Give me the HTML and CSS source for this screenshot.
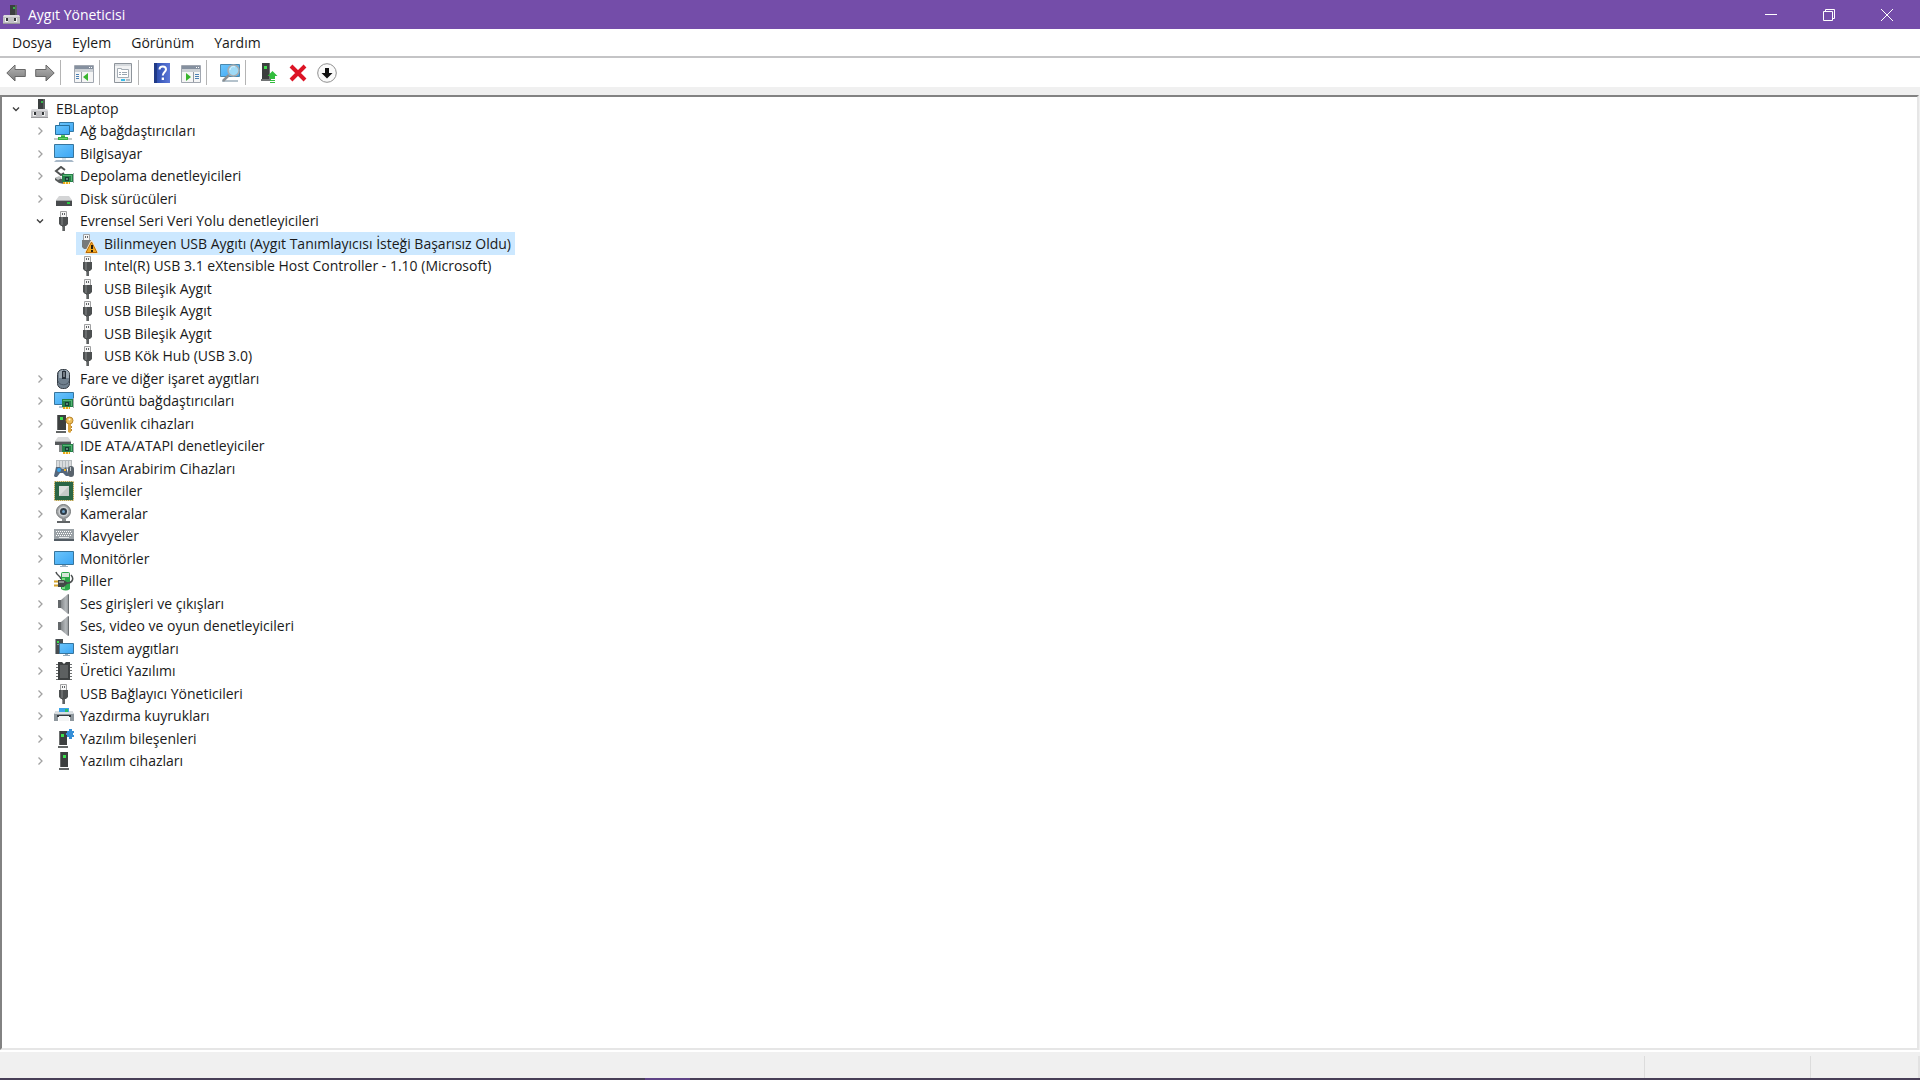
FILE: index.html
```html
<!DOCTYPE html>
<html lang="tr">
<head>
    <meta charset="utf-8">
    <meta name="viewport" content="width=device-width, initial-scale=1">
    <title>Aygıt Yöneticisi</title>
    <link rel="stylesheet" href="styles.css">
</head>
<body>
    <svg class="sprite" aria-hidden="true">
        <defs>
            <linearGradient id="screen" x1="0" y1="0" x2="1" y2="1">
                <stop offset="0" stop-color="#6cc5fb"/>
                <stop offset="1" stop-color="#3ba6f4"/>
            </linearGradient>
            <linearGradient id="metal" x1="0" y1="0" x2="1" y2="0">
                <stop offset="0" stop-color="#85898c"/>
                <stop offset=".6" stop-color="#b4b8bb"/>
                <stop offset="1" stop-color="#8b8f92"/>
            </linearGradient>
            <linearGradient id="arrow" x1="0" y1="0" x2="0" y2="1">
                <stop offset="0" stop-color="#b5b5b5"/>
                <stop offset="1" stop-color="#7c7c7c"/>
            </linearGradient>
            <linearGradient id="book" x1="0" y1="0" x2="1" y2="0">
                <stop offset="0" stop-color="#2446a8"/>
                <stop offset="1" stop-color="#5d78d8"/>
            </linearGradient>
        </defs>
        <symbol id="i-pc" viewBox="0 0 20 20">
            <path d="M8 0h6v11H8z" fill="#3b3f3f"/>
            <path d="M13 0h2v11h-2z" fill="#5a5e5e"/>
            <path d="M11 2h2v2h-2z" fill="#37b24a"/>
            <path d="M2 10h15l1 3v6H1v-6z" fill="#c0c0c3"/>
            <path d="M2 10h15l1 2H1z" fill="#d9d9dc"/>
            <path d="M1 18h17v1H1z" fill="#98989b"/>
            <path d="M3 13h3v4H3zM12 13h3v4h-3z" fill="#f1f1f1"/>
            <path d="M4 13h2v3H4zM12 13h2v3h-2z" fill="#333639"/>
        </symbol>
        <symbol id="i-net" viewBox="0 0 20 20">
            <path d="M5.500 1.500h14v9h-14z" fill="url(#screen)" stroke="#3479a5"/>
            <path d="M1.500 4.500h14v9h-14z" fill="url(#screen)" stroke="#276f9c"/>
            <path d="M0 17h18v2H0z" fill="#c5cbc8"/>
            <path d="M7 14h4v2h3v3H4v-3h3z" fill="#35ad43"/>
            <path d="M7 14h4v1H7zM5 17h8v1H5z" fill="#69d36b"/>
        </symbol>
        <symbol id="i-computer" viewBox="0 0 20 20">
            <path d="M.5.500h19v13H.5z" fill="url(#screen)" stroke="#37759d"/>
            <path d="M8 14h4v2H8z" fill="#dce3e9"/>
            <path d="M2 16h16l2 2H0z" fill="#a7b8c8"/>
        </symbol>
        <symbol id="i-card" viewBox="0 0 20 20">
            <path d="M8 8h11v8H8z" fill="#258047"/>
            <path d="M9 9h9v1H9zM17 9h1v6h-1z" fill="#58b777"/>
            <path d="M11 11h4v4h-4z" fill="#183d35"/>
            <path d="M12 12h2v2h-2z" fill="#5d8a78"/>
            <path d="M19 7h1v10h-1z" fill="#a8adb0"/>
            <path d="M9 16h7v2H9z" fill="#e8a719"/>
            <path d="M11 16h1v2h-1zM14 16h1v2h-1z" fill="#fff0a4"/>
        </symbol>
        <symbol id="i-storage" viewBox="0 0 20 20">
            <path d="M11 4 7 1 2 5l5 4 3-2" fill="none" stroke="#505252" stroke-width="2"/>
            <path d="m1 12 4-1 4 3 1 4-5-1-4-3z" fill="#555959"/>
            <path d="m1 12 4-2 3 2-4 2z" fill="#bcc0c0"/>
            <use href="#i-card"/>
        </symbol>
        <symbol id="i-disk" viewBox="0 0 20 20">
            <path d="m5 7-3 4h16l-3-4z" fill="#d4d5d6"/>
            <path d="M2 11h16v6H2z" fill="#484b4d"/>
            <path d="M2 11h16v1H2z" fill="#a4a6a8"/>
            <path d="M13 13h3v2h-3z" fill="#29c743"/>
        </symbol>
        <symbol id="i-usb" viewBox="0 0 20 20">
            <path d="M6.500.5h6V7h-6z" fill="#f5f5f5" stroke="#a0a1a2"/>
            <path d="M8 2h1v2H8zM10 2h1v2h-1z" fill="#626567"/>
            <path d="M5 6h9v7l-2 2H7l-2-2z" fill="#4d5051"/>
            <path d="M7 6h2v8H7z" fill="#6a6d6e"/>
            <path d="M8 15h3v5H8z" fill="#5e6162"/>
            <path d="M8 16h1v4H8z" fill="#929595"/>
        </symbol>
        <symbol id="i-usb-warn" viewBox="0 0 20 20">
            <path d="M5.500.5h6V7h-6z" fill="#f5f5f5" stroke="#a0a1a2"/>
            <path d="M7 2h1v2H7zM9 2h1v2H9z" fill="#626567"/>
            <path d="M4 6h9v7l-2 2H6l-2-2z" fill="#77797a"/>
            <path d="M13.500 7.500 19 18.500H8z" fill="#f1a51b" stroke="#f6e5c8" stroke-width="2.500" stroke-linejoin="round"/>
            <path d="M13.500 8 19 18.500H8z" fill="#f2ab22" stroke="#b96a07" stroke-linejoin="round"/>
            <path d="M13 11h2v4h-2zM13 16h2v2h-2z" fill="#291d0b"/>
        </symbol>
        <symbol id="i-mouse" viewBox="0 0 20 20">
            <rect x="3.500" y=".5" width="12" height="19" rx="5" fill="#70808e" stroke="#333a42"/>
            <path d="M5 3c2-2 3-2 4-2v8H5zM11 1c3 0 4 2 4 4v4h-4z" fill="#9eabb5"/>
            <path d="M8 2h4v8H8z" fill="#273039"/>
            <path d="M9.500 3h1v5h-1z" fill="#c1c8ce"/>
            <path d="M4 12c1 5 10 5 11 0" fill="none" stroke="#4b5865"/>
        </symbol>
        <symbol id="i-display" viewBox="0 0 20 20">
            <path d="M.5 1.500h19v12H.5z" fill="url(#screen)" stroke="#37759d"/>
            <path d="M5 15h4v2H5z" fill="#bcc9d2"/>
            <use href="#i-card"/>
        </symbol>
        <symbol id="i-tower" viewBox="0 0 20 20">
            <path d="M6 1h8v15H6z" fill="#3c3f3f"/>
            <path d="M6 1h1v15H6z" fill="#6b6e6e"/>
            <path d="M5 17h10v2H5z" fill="#626565"/>
            <path d="M9 4h3v3H9z" fill="#3de04e"/>
        </symbol>
        <symbol id="i-security" viewBox="0 0 20 20">
            <path d="M3 1h9v15H3z" fill="#3c3f3f"/>
            <path d="M3 1h1v15H3z" fill="#6b6e6e"/>
            <path d="M2 17h10v2H2z" fill="#626565"/>
            <path d="M6 3h3v3H6z" fill="#3de04e"/>
            <circle cx="15.500" cy="6.500" r="3.500" fill="#edbd57" stroke="#b9852d"/>
            <circle cx="15.500" cy="5.500" r="1" fill="#fff"/>
            <path d="M14 10h3v8l-1 1-2-1z" fill="#dca640"/>
            <path d="M17 12h1v2h-1zM17 15h1v2h-1z" fill="#b9852d"/>
        </symbol>
        <symbol id="i-ide" viewBox="0 0 20 20">
            <path d="m4 1-3 4h16l-3-4z" fill="#dadbdc"/>
            <path d="M1 5h16v4H1z" fill="#55595b"/>
            <path d="M1 5h16v1H1z" fill="#a9abad"/>
            <path d="M5 9h4v7H5z" fill="#858989"/>
            <use href="#i-card"/>
        </symbol>
        <symbol id="i-hid" viewBox="0 0 20 20">
            <path d="M2 1h16v9H2z" fill="#b5babd"/>
            <path d="M3 3h14M3 5h14M3 7h14" stroke="#fff" stroke-dasharray="2 1"/>
            <path d="M0 17 2 8h4l2 2h2l2-2 3 9h-3l-3-3H6l-3 4H1z" fill="#55677b"/>
            <circle cx="5" cy="11" r="2" fill="#38a4ed"/>
            <path d="M10 10h2v2h-2z" fill="#f0b22e"/>
            <rect x="14" y="7" width="6" height="11" rx="3" fill="#59636c"/>
            <path d="M16 8h1v4h-1z" fill="#c3c9ce"/>
        </symbol>
        <symbol id="i-cpu" viewBox="0 0 20 20">
            <rect x="1" y="1" width="18" height="18" fill="none" stroke="#b8a34e" stroke-width="2" stroke-dasharray="1 1"/>
            <path d="M1 1h18v18H1z" fill="#2b6646"/>
            <rect x=".5" y=".5" width="19" height="19" fill="none" stroke="#b8a34e" stroke-dasharray="1 1"/>
            <path d="M5 5h10v10H5z" fill="#dcdfdd"/>
            <path d="M5 15 15 5v10z" fill="#c5cac7"/>
        </symbol>
        <symbol id="i-camera" viewBox="0 0 20 20">
            <circle cx="9.500" cy="7.500" r="7" fill="#a4a7a9" stroke="#747779"/>
            <circle cx="9.500" cy="7.500" r="5" fill="#d0d3d5"/>
            <circle cx="9.500" cy="7.500" r="3.500" fill="#303c47"/>
            <circle cx="9.500" cy="7.500" r="1.500" fill="#6fa0c5"/>
            <path d="M8 15h4v2H8z" fill="#898d8f"/>
            <path d="M3 17h13v2H3z" fill="#606466"/>
        </symbol>
        <symbol id="i-keyboard" viewBox="0 0 20 20">
            <path d="M0 3h20v12H0z" fill="#9aa1a6"/>
            <path d="M0 13h20v2H0z" fill="#535c64"/>
            <path d="M2 5.500h16M3 7.500h15M2 9.500h16" stroke="#fff" stroke-dasharray="1 1"/>
            <path d="M5 11.500h10" stroke="#e5e8ea"/>
        </symbol>
        <symbol id="i-monitor" viewBox="0 0 20 20">
            <path d="M.5 2.500h19v13H.5z" fill="url(#screen)" stroke="#37759d"/>
            <path d="M8 16h4v1H8zM6 17h8v1H6z" fill="#9db0bf"/>
        </symbol>
        <symbol id="i-battery" viewBox="0 0 20 20">
            <path d="M7 3q0-2 2-2h5q2 0 2 2v15q-4 3-9 0z" fill="#2ea64b"/>
            <path d="M8 2h7v4H8z" fill="#d8e6da"/>
            <path d="M8 7h3v11H8z" fill="#79dd82"/>
            <path d="M13 12c6 0 7-5 4-8M2 1c1 4 4 3 5 7" fill="none" stroke="#4b4f50" stroke-width="1.500"/>
            <path d="M4 9h6l4 3-4 4H4z" fill="#444948"/>
            <path d="M0 10.500h4M0 14.500h4" stroke="#d3a22b" stroke-width="2"/>
            <path d="M5 10h5v2H5z" fill="#8d9290"/>
        </symbol>
        <symbol id="i-speaker" viewBox="0 0 20 20">
            <path d="M4 6h4v8H4z" fill="#64686b"/>
            <path d="m7 6 7-6h1v20h-1l-7-6z" fill="url(#metal)"/>
            <path d="M14 1h1v18h-1z" fill="#6b6f72"/>
        </symbol>
        <symbol id="i-system" viewBox="0 0 20 20">
            <path d="M1 0h8v15H1z" fill="#484d50"/>
            <path d="M1 0h1v15H1zM3 5h5v1H3z" fill="#959b9e"/>
            <path d="M3 2h2v2H3z" fill="#3ae24b"/>
            <path d="M5.500 4.500h14v10h-14z" fill="url(#screen)" stroke="#37759d"/>
            <path d="M11 15h3v1h2v1H9v-1h2z" fill="#94aabb"/>
        </symbol>
        <symbol id="i-firmware" viewBox="0 0 20 20">
            <path d="M2 3.500h16M2 6.500h16M2 9.500h16M2 12.500h16M2 15.500h16M2 18.500h16" stroke="#6d7071"/>
            <path d="M4 1h4l2 2 2-2h4v18H4z" fill="#3d4041"/>
            <path d="M6 4h8v13H6z" fill="#5d6061"/>
        </symbol>
        <symbol id="i-printer" viewBox="0 0 20 20">
            <path d="M5 2h10v5H5z" fill="#3ba3e8"/>
            <path d="M11 3h3v3h-3z" fill="#26bf69"/>
            <path d="m2 5-2 3v7h4v-4h12v4h4V8l-2-3z" fill="#8e979d"/>
            <path d="M2 5h16l2 3H0z" fill="#d9dee1"/>
            <path d="M5 2h10v4H5z" fill="#3ba3e8"/>
            <path d="M11 3h3v3h-3z" fill="#26bf69"/>
            <path d="M3 9h14v2H3z" fill="#34393e"/>
            <path d="M5 10h10v5H5z" fill="#f4f5f5"/>
        </symbol>
        <symbol id="i-component" viewBox="0 0 20 20">
            <path d="M5 2h8v14H5z" fill="#3c3f3f"/>
            <path d="M5 2h1v14H5z" fill="#6b6e6e"/>
            <path d="M4 17h10v2H4z" fill="#626565"/>
            <path d="M7 5h3v3H7z" fill="#3de04e"/>
            <path d="M13 2h2V0h3v2h2v2h-1v2h1v2h-2v2h-3V8h-2V6h-1V4h1z" fill="#368fd7"/>
        </symbol>
        <symbol id="t-back" viewBox="0 0 20 20">
            <path d="M.8 10 9 2v4.500h10.300v7H9V18z" fill="url(#arrow)" stroke="#686868"/>
        </symbol>
        <symbol id="t-window" viewBox="0 0 20 20">
            <path d="M.5 2.500h19v17H.5z" fill="#f5f5f5" stroke="#a1a7b0"/>
            <path d="M1 3h18v3H1z" fill="#85909f"/>
            <path d="M15 4h1v1h-1zM17 4h1v1h-1z" fill="#fff"/>
            <path d="M1 6h18v3H1z" fill="#cbd0d5"/>
        </symbol>
        <symbol id="t-tree" viewBox="0 0 20 20">
            <use href="#t-window"/>
            <path d="M7 9h1v10H7z" fill="#9299a3"/>
            <path d="M2 11.500h3M2 13.500h3M2 15.500h3" stroke="#4b81b5"/>
            <path d="M14 10v8l-5-4z" fill="#39b52e"/>
        </symbol>
        <symbol id="t-props" viewBox="0 0 20 20">
            <path d="M1.500.5h17v19h-17z" fill="#f1f2f3" stroke="#8e949b"/>
            <path d="M2 1h16v2H2z" fill="#d5d9dd"/>
            <path d="M4.500 5.500h4v1h7v8h-11z" fill="#fff" stroke="#a5adb5"/>
            <path d="M6 9.500h2M6 11.500h2M9 9.500h5M9 11.500h5" stroke="#9ba6b1"/>
            <path d="M8 16h4v2H8z" fill="#38bce9"/>
            <path d="M13 16h4v2h-4z" fill="#b8c0c8"/>
        </symbol>
        <symbol id="t-help" viewBox="0 0 20 20">
            <path d="M2 0h16v20H2z" fill="url(#book)"/>
            <path d="M2 0h3v20H2z" fill="#203a87"/>
            <path d="M7.500 6.500c0-4 6.500-4 6.500 0 0 2.500-3.200 2.500-3.200 6" fill="none" stroke="#fff" stroke-width="2"/>
            <path d="M9.700 14.500H12V17H9.700z" fill="#fff"/>
        </symbol>
        <symbol id="t-action" viewBox="0 0 20 20">
            <use href="#t-window"/>
            <path d="M12 9h1v10h-1z" fill="#9299a3"/>
            <path d="M14 11.500h4M14 13.500h4M14 15.500h4" stroke="#4b81b5"/>
            <path d="M5 10v8l5-4z" fill="#39b52e"/>
        </symbol>
        <symbol id="t-scan" viewBox="0 0 20 20">
            <path d="M.5 1.500h19v12H.5z" fill="url(#screen)" stroke="#4b89ae"/>
            <path d="M2 17h16v2H2z" fill="#b4c2cc"/>
            <path d="m9 12-6 6" stroke="#8b8f92" stroke-width="2.500"/>
            <circle cx="13.500" cy="7.500" r="5.500" fill="#9edaf7" stroke="#a6acb0" stroke-width="1.500"/>
            <path d="M10 7c0-3 3-4 5-3" stroke="#dff5ff" fill="none"/>
        </symbol>
        <symbol id="t-update" viewBox="0 0 20 20">
            <path d="M3 0h8v16H3z" fill="#3b3e3e"/>
            <path d="M10 0h1v16h-1z" fill="#727575"/>
            <path d="M2 16h10v2H2z" fill="#707374"/>
            <path d="M5 3h3v3H5z" fill="#42dc4f"/>
            <path d="m13.500 8 5 5H16v3h-5v-3H8.500zM11 17h5v1h-5zM11 19h5v1h-5z" fill="#32bd3d"/>
        </symbol>
        <symbol id="t-remove" viewBox="0 0 20 20">
            <path d="m3 3 14 14M17 3 3 17" stroke="#dc1425" stroke-width="4"/>
        </symbol>
        <symbol id="t-disable" viewBox="0 0 20 20">
            <circle cx="10" cy="10" r="9.300" fill="#fafafa" stroke="#8f8f8f"/>
            <path d="M8 5h4v5h3.500L10 15.500 4.500 10H8z" fill="#111"/>
        </symbol>
        <symbol id="c-right" viewBox="0 0 12 12">
            <path d="m4.500 2.500 3.500 3.500-3.500 3.500" fill="none" stroke="#a2a2a2" stroke-width="1.300"/>
        </symbol>
        <symbol id="c-down" viewBox="0 0 12 12">
            <path d="M3 4.500 6 7.500 9 4.500" fill="none" stroke="#404040" stroke-width="1.400"/>
        </symbol>
    </svg>

    <header class="titlebar">
        <svg class="icon"><use href="#i-pc"/></svg>
        <h1 class="title">Aygıt Yöneticisi</h1>
        <div class="window-buttons">
            <button aria-label="Simge durumuna küçült"><svg viewBox="0 0 12 12"><path d="M0 5.500h12"/></svg></button>
            <button aria-label="Önceki boyut"><svg viewBox="0 0 12 12"><path d="M.5 2.500h9v9h-9zM2.500 2.500v-2h9v9h-2"/></svg></button>
            <button aria-label="Kapat"><svg viewBox="0 0 12 12"><path d="m0 0 12 12M12 0 0 12"/></svg></button>
        </div>
    </header>

    <nav class="menubar">
        <button>Dosya</button>
        <button>Eylem</button>
        <button>Görünüm</button>
        <button>Yardım</button>
    </nav>

    <div class="toolbar" role="toolbar">
        <button aria-label="Geri"><svg class="icon"><use href="#t-back"/></svg></button>
        <button aria-label="İleri"><svg class="icon flip"><use href="#t-back"/></svg></button>
        <span class="separator"></span>
        <button aria-label="Konsol ağacını göster"><svg class="icon"><use href="#t-tree"/></svg></button>
        <span class="separator"></span>
        <button aria-label="Özellikler"><svg class="icon"><use href="#t-props"/></svg></button>
        <span class="separator"></span>
        <button aria-label="Yardım"><svg class="icon"><use href="#t-help"/></svg></button>
        <button aria-label="Eylem bölmesini göster"><svg class="icon"><use href="#t-action"/></svg></button>
        <span class="separator"></span>
        <button aria-label="Donanım değişikliklerini tara"><svg class="icon"><use href="#t-scan"/></svg></button>
        <span class="separator"></span>
        <button aria-label="Sürücüyü güncelleştir"><svg class="icon"><use href="#t-update"/></svg></button>
        <button aria-label="Aygıtı kaldır"><svg class="icon"><use href="#t-remove"/></svg></button>
        <button aria-label="Aygıtı devre dışı bırak"><svg class="icon"><use href="#t-disable"/></svg></button>
    </div>

    <main class="content">
        <ul class="tree" role="tree">
            <li class="node root" role="treeitem" aria-level="1"><button class="toggle" aria-label="Daralt"><svg><use href="#c-down"/></svg></button><span class="item"><svg class="icon"><use href="#i-pc"/></svg>EBLaptop</span></li>
            <li class="node" role="treeitem" aria-level="2"><button class="toggle" aria-label="Genişlet"><svg><use href="#c-right"/></svg></button><span class="item"><svg class="icon"><use href="#i-net"/></svg>Ağ bağdaştırıcıları</span></li>
            <li class="node" role="treeitem" aria-level="2"><button class="toggle" aria-label="Genişlet"><svg><use href="#c-right"/></svg></button><span class="item"><svg class="icon"><use href="#i-computer"/></svg>Bilgisayar</span></li>
            <li class="node" role="treeitem" aria-level="2"><button class="toggle" aria-label="Genişlet"><svg><use href="#c-right"/></svg></button><span class="item"><svg class="icon"><use href="#i-storage"/></svg>Depolama denetleyicileri</span></li>
            <li class="node" role="treeitem" aria-level="2"><button class="toggle" aria-label="Genişlet"><svg><use href="#c-right"/></svg></button><span class="item"><svg class="icon"><use href="#i-disk"/></svg>Disk sürücüleri</span></li>
            <li class="node" role="treeitem" aria-level="2"><button class="toggle" aria-label="Daralt"><svg><use href="#c-down"/></svg></button><span class="item"><svg class="icon"><use href="#i-usb"/></svg>Evrensel Seri Veri Yolu denetleyicileri</span></li>
            <li class="node leaf" role="treeitem" aria-level="3" aria-selected="true"><span class="item selected"><svg class="icon"><use href="#i-usb-warn"/></svg>Bilinmeyen USB Aygıtı (Aygıt Tanımlayıcısı İsteği Başarısız Oldu)</span></li>
            <li class="node leaf" role="treeitem" aria-level="3"><span class="item"><svg class="icon"><use href="#i-usb"/></svg>Intel(R) USB 3.1 eXtensible Host Controller - 1.10 (Microsoft)</span></li>
            <li class="node leaf" role="treeitem" aria-level="3"><span class="item"><svg class="icon"><use href="#i-usb"/></svg>USB Bileşik Aygıt</span></li>
            <li class="node leaf" role="treeitem" aria-level="3"><span class="item"><svg class="icon"><use href="#i-usb"/></svg>USB Bileşik Aygıt</span></li>
            <li class="node leaf" role="treeitem" aria-level="3"><span class="item"><svg class="icon"><use href="#i-usb"/></svg>USB Bileşik Aygıt</span></li>
            <li class="node leaf" role="treeitem" aria-level="3"><span class="item"><svg class="icon"><use href="#i-usb"/></svg>USB Kök Hub (USB 3.0)</span></li>
            <li class="node" role="treeitem" aria-level="2"><button class="toggle" aria-label="Genişlet"><svg><use href="#c-right"/></svg></button><span class="item"><svg class="icon"><use href="#i-mouse"/></svg>Fare ve diğer işaret aygıtları</span></li>
            <li class="node" role="treeitem" aria-level="2"><button class="toggle" aria-label="Genişlet"><svg><use href="#c-right"/></svg></button><span class="item"><svg class="icon"><use href="#i-display"/></svg>Görüntü bağdaştırıcıları</span></li>
            <li class="node" role="treeitem" aria-level="2"><button class="toggle" aria-label="Genişlet"><svg><use href="#c-right"/></svg></button><span class="item"><svg class="icon"><use href="#i-security"/></svg>Güvenlik cihazları</span></li>
            <li class="node" role="treeitem" aria-level="2"><button class="toggle" aria-label="Genişlet"><svg><use href="#c-right"/></svg></button><span class="item"><svg class="icon"><use href="#i-ide"/></svg>IDE ATA/ATAPI denetleyiciler</span></li>
            <li class="node" role="treeitem" aria-level="2"><button class="toggle" aria-label="Genişlet"><svg><use href="#c-right"/></svg></button><span class="item"><svg class="icon"><use href="#i-hid"/></svg>İnsan Arabirim Cihazları</span></li>
            <li class="node" role="treeitem" aria-level="2"><button class="toggle" aria-label="Genişlet"><svg><use href="#c-right"/></svg></button><span class="item"><svg class="icon"><use href="#i-cpu"/></svg>İşlemciler</span></li>
            <li class="node" role="treeitem" aria-level="2"><button class="toggle" aria-label="Genişlet"><svg><use href="#c-right"/></svg></button><span class="item"><svg class="icon"><use href="#i-camera"/></svg>Kameralar</span></li>
            <li class="node" role="treeitem" aria-level="2"><button class="toggle" aria-label="Genişlet"><svg><use href="#c-right"/></svg></button><span class="item"><svg class="icon"><use href="#i-keyboard"/></svg>Klavyeler</span></li>
            <li class="node" role="treeitem" aria-level="2"><button class="toggle" aria-label="Genişlet"><svg><use href="#c-right"/></svg></button><span class="item"><svg class="icon"><use href="#i-monitor"/></svg>Monitörler</span></li>
            <li class="node" role="treeitem" aria-level="2"><button class="toggle" aria-label="Genişlet"><svg><use href="#c-right"/></svg></button><span class="item"><svg class="icon"><use href="#i-battery"/></svg>Piller</span></li>
            <li class="node" role="treeitem" aria-level="2"><button class="toggle" aria-label="Genişlet"><svg><use href="#c-right"/></svg></button><span class="item"><svg class="icon"><use href="#i-speaker"/></svg>Ses girişleri ve çıkışları</span></li>
            <li class="node" role="treeitem" aria-level="2"><button class="toggle" aria-label="Genişlet"><svg><use href="#c-right"/></svg></button><span class="item"><svg class="icon"><use href="#i-speaker"/></svg>Ses, video ve oyun denetleyicileri</span></li>
            <li class="node" role="treeitem" aria-level="2"><button class="toggle" aria-label="Genişlet"><svg><use href="#c-right"/></svg></button><span class="item"><svg class="icon"><use href="#i-system"/></svg>Sistem aygıtları</span></li>
            <li class="node" role="treeitem" aria-level="2"><button class="toggle" aria-label="Genişlet"><svg><use href="#c-right"/></svg></button><span class="item"><svg class="icon"><use href="#i-firmware"/></svg>Üretici Yazılımı</span></li>
            <li class="node" role="treeitem" aria-level="2"><button class="toggle" aria-label="Genişlet"><svg><use href="#c-right"/></svg></button><span class="item"><svg class="icon"><use href="#i-usb"/></svg>USB Bağlayıcı Yöneticileri</span></li>
            <li class="node" role="treeitem" aria-level="2"><button class="toggle" aria-label="Genişlet"><svg><use href="#c-right"/></svg></button><span class="item"><svg class="icon"><use href="#i-printer"/></svg>Yazdırma kuyrukları</span></li>
            <li class="node" role="treeitem" aria-level="2"><button class="toggle" aria-label="Genişlet"><svg><use href="#c-right"/></svg></button><span class="item"><svg class="icon"><use href="#i-component"/></svg>Yazılım bileşenleri</span></li>
            <li class="node" role="treeitem" aria-level="2"><button class="toggle" aria-label="Genişlet"><svg><use href="#c-right"/></svg></button><span class="item"><svg class="icon"><use href="#i-tower"/></svg>Yazılım cihazları</span></li>
        </ul>
    </main>

    <footer class="statusbar">
        <span class="status-main"></span>
        <span class="status-wide"></span>
        <span class="status-small"></span>
    </footer>
    <div class="taskbar-edge"><span class="taskbar-active"></span></div>
</body>
</html>
```
FILE: styles.css
```css
* {
    box-sizing: border-box;
}
body {
    display: flex;
    flex-direction: column;
    min-height: 100vh;
    margin: 0;
    background-color: #f0f0f0;
    color: #1a1a1a;
    font-family: "Open Sans", "Noto Sans", sans-serif;
    font-size: 14px;
    line-height: 20px;
}
button {
    padding: 0;
    border: 0;
    background: none;
    color: inherit;
    font: inherit;
}
.sprite {
    position: absolute;
    width: 0;
    height: 0;
}
.icon {
    flex: none;
    width: 20px;
    height: 20px;
}
.flip {
    transform: scaleX(-1);
}

.titlebar {
    display: flex;
    align-items: center;
    gap: 6px;
    height: 29px;
    padding: 0 4px 0 2px;
    background-color: #744da9;
    color: #fff;
}
.title {
    margin: 0;
    font-size: 14px;
    font-weight: normal;
}
.window-buttons {
    display: flex;
    margin-left: auto;
}
.window-buttons button {
    display: flex;
    align-items: center;
    justify-content: center;
    width: 58px;
    height: 28px;
}
.window-buttons button:hover {
    background-color: #8a68b8;
}
.window-buttons svg {
    width: 12px;
    height: 12px;
    fill: none;
    stroke: #fff;
}

.menubar {
    display: flex;
    height: 29px;
    padding: 0 2px;
    border-bottom: 2px solid #c4c4c6;
    background-color: #fff;
}
.menubar button {
    padding: 0 10px;
}
.menubar button:hover {
    background-color: #cce8ff;
}

.toolbar {
    display: flex;
    align-items: center;
    height: 29px;
    padding-left: 1px;
    background-color: #fff;
}
.toolbar button {
    display: flex;
    align-items: center;
    justify-content: center;
    width: 29px;
    height: 28px;
}
.toolbar button:hover {
    background-color: #e5f3ff;
}
.separator {
    width: 1px;
    height: 25px;
    margin: 0 8px 0 1px;
    background-color: #b4b4b4;
}

.content {
    flex: 1;
    margin: 8px 1px 0 0;
    border: 2px solid #828282;
    border-right-color: #e6e6e6;
    border-bottom-color: #e6e6e6;
    background-color: #fff;
}
.tree {
    margin: 0;
    padding: 0;
    list-style: none;
}
/* 22/23px alternate: rows at 150% scaling */
.node {
    display: flex;
    align-items: center;
    height: 22px;
    padding-left: 32px;
}
.node:nth-child(odd) {
    height: 23px;
}
.root {
    padding-left: 8px;
}
.leaf {
    padding-left: 74px;
}
.toggle {
    display: flex;
    width: 12px;
    height: 12px;
    margin-right: 6px;
}
.toggle svg {
    width: 12px;
    height: 12px;
}
.item {
    display: flex;
    align-items: center;
    gap: 6px;
    height: 100%;
    padding: 0 4px 0 2px;
    white-space: nowrap;
}
.selected {
    background-color: #cce8ff;
}

.statusbar {
    display: flex;
    height: 28px;
    padding-top: 4px;
    border-top: 2px solid #fff;
}
.status-main {
    flex: 1;
}
.status-wide {
    width: 166px;
    border-left: 1px solid #dcdcdc;
}
.status-small {
    width: 110px;
    border-left: 1px solid #dcdcdc;
    border-right: 2px solid #e2e2e2;
}
.taskbar-edge {
    display: flex;
    height: 2px;
    padding-left: 645px;
    background-color: #483f57;
}
.taskbar-active {
    width: 45px;
    background-color: #5f4487;
}
```
